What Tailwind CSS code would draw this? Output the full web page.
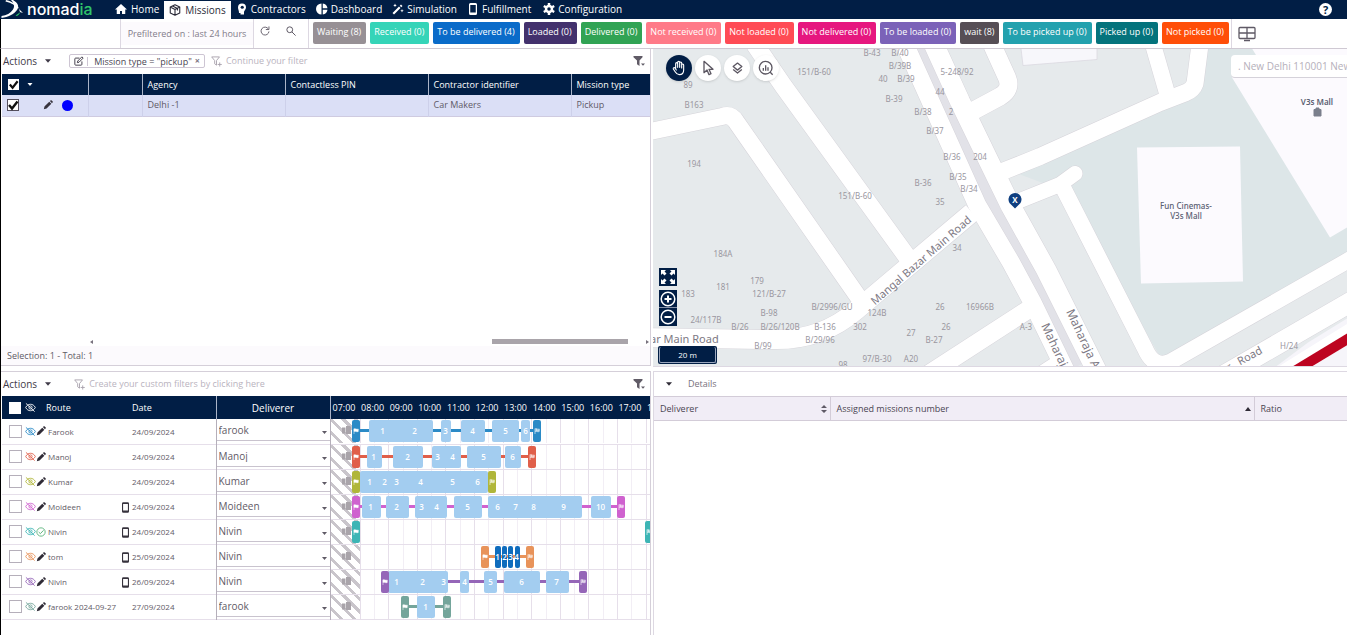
<!DOCTYPE html>
<html lang="en">
<head>
    <meta charset="UTF-8">
    <meta name="viewport" content="width=device-width, initial-scale=1.0">
    <title>Nomadia - Missions</title>
    <script src="https://cdn.jsdelivr.net/npm/@tailwindcss/browser@4"></script>
</head>
<body class="h-screen overflow-hidden flex flex-col bg-white font-['Open_Sans','Noto_Sans',sans-serif] text-[9px] leading-3 text-[#5f5a66]">

    <!-- Icons -->
    <svg class="hidden">
        <symbol id="eye-off" viewBox="0 0 24 24">
            <path d="M1.500 12C4 7 8 5 12 5s8 2 10.500 7c-2.500 5-6.500 7-10.500 7S4 17 1.500 12z" fill="none" stroke="currentColor" stroke-width="1.900"/>
            <circle cx="12" cy="12" r="3.500" fill="none" stroke="currentColor" stroke-width="1.900"/>
            <path d="M2 3l19 18" stroke="currentColor" stroke-width="2"/>
        </symbol>
        <symbol id="pencil" viewBox="0 0 24 24">
            <path d="M2 22l1.500-6.500L15 4l5 5L8.500 20.500zM16.500 2.500l1.500-1.500c1-1 2-.8 2.800 0l2.200 2.200c.8.8.8 1.800 0 2.800L21.500 7.500z" fill="currentColor"/>
        </symbol>
        <symbol id="phone" viewBox="0 0 16 24">
            <path d="M3 0h10a3 3 0 0 1 3 3v18a3 3 0 0 1-3 3H3a3 3 0 0 1-3-3V3a3 3 0 0 1 3-3zM2.500 4v15h11V4z" fill="currentColor" fill-rule="evenodd"/>
        </symbol>
        <symbol id="check-circle" viewBox="0 0 24 24">
            <circle cx="12" cy="12" r="10" fill="none" stroke="currentColor" stroke-width="2"/>
            <path d="M6.500 12l4 4 7.500-8" fill="none" stroke="currentColor" stroke-width="2.200"/>
        </symbol>
        <symbol id="caret" viewBox="0 0 10 6"><path d="M0 0h10L5 6z" fill="currentColor"/></symbol>
        <symbol id="tick" viewBox="0 0 12 12"><path d="M2 6l3 3.500L10.500 2.500" fill="none" stroke="#111" stroke-width="2.400"/></symbol>
        <symbol id="funnel-add" viewBox="0 0 24 24">
            <path d="M1.500 2h17l-6.500 8v10l-4-3v-7z" fill="none" stroke="currentColor" stroke-width="2"/>
            <path d="M19 14v9M14.500 18.500h9" stroke="currentColor" stroke-width="2"/>
        </symbol>
        <symbol id="funnel" viewBox="0 0 24 24">
            <path d="M1 2h18v2.500l-6 6.500v11l-5-3.500V11L1 4.500z" fill="currentColor"/>
            <path d="M16 17h8l-4 4.500z" fill="currentColor"/>
        </symbol>
        <symbol id="truck" viewBox="0 0 9 9"><path d="M0 1.500h3.500v6H0zM4 0h4l1 1v7H4z" fill="currentColor"/></symbol>
        <symbol id="flag" viewBox="0 0 12 12"><path d="M2 1v11M2 2c3-2 5 2 8.500 0v5c-3.500 2-5.500-2-8.500 0z" fill="#fff" stroke="#fff" stroke-width="1"/></symbol>
        <symbol id="flag-end" viewBox="0 0 12 12"><path d="M2 1v11M2 2c3-2 5 2 8.500 0v5c-3.500 2-5.500-2-8.500 0M5 1.500v5M8 2.500v5M2 4.500c3-2 5 2 8.500 0" fill="none" stroke="#fff" stroke-width="1.200"/></symbol>
    </svg>

    <!-- Navigation -->
    <header class="h-[19px] shrink-0 bg-[#011e45] text-white flex items-stretch">
        <a href="#" class="w-[110px] flex items-center gap-1 pb-[2px] pl-px text-[16px] font-medium font-[Inter]">
            <svg viewBox="0 0 22 18" class="w-[22px] h-[18px]">
                <path d="M5 0c8 2 11 5 13.500 9-4-3.500-8-6-14-7.500z" fill="#fff"/>
                <path d="M12 0c5 3 6.500 6.500 4 10C13 14.500 7 17 .5 18v-2c5-.5 9-3 11.500-6.500C14 6.500 13 3 10 0z" fill="#fff"/>
                <path d="M14.500 15.500c1.800-1 3.500-2.200 5-3.500-1 2-2 3-3.500 4z" fill="#2fc46a"/>
                <path d="M18 9l4 4-3-1z" fill="#fff"/>
            </svg>
            <span>nomad<span class="text-[#2fc46a]">ia</span></span>
        </a>
        <nav class="flex items-stretch pb-px text-[10px] font-medium">
            <a href="#" class="flex items-center gap-1 px-[5px]">
                <svg viewBox="0 0 24 24" class="w-3 h-3"><path d="M12 2L0 13h3.500v9H10v-6h4v6h6.500v-9H24z" fill="currentColor"/></svg>
                Home
            </a>
            <a href="#" class="flex items-center gap-1 px-[5px] mt-px -mb-px bg-white text-[#2a2a38]">
                <svg viewBox="0 0 24 24" class="w-3 h-3" fill="none" stroke="currentColor" stroke-width="2.200" stroke-linejoin="round"><path d="M12 1.500l9.500 4.500v12L12 22.500 2.500 18V6zM2.500 6L12 11l9.500-5M12 11v11.500M7 3.800L17 9v4"/></svg>
                Missions
            </a>
            <a href="#" class="flex items-center gap-[3px] px-[5px]">
                <svg viewBox="0 0 24 24" class="w-3 h-3"><path d="M12 1a8 8 0 0 1 8 8c0 4-4 6-4 9v5H9v-3H6c0-5-2-7-2-11a8 8 0 0 1 8-8z" fill="currentColor"/><circle cx="12.500" cy="8.500" r="3.200" fill="#011e45"/></svg>
                Contractors
            </a>
            <a href="#" class="flex items-center gap-[3px] px-[5px]">
                <svg viewBox="0 0 24 24" class="w-3 h-3"><path d="M11 1v22A11 11 0 0 1 11 1zM13.500 1A11 11 0 0 1 23 10.500h-9.500zM13.500 13.500H23A11 11 0 0 1 13.500 23z" fill="currentColor"/></svg>
                Dashboard
            </a>
            <a href="#" class="flex items-center gap-[3px] px-[5px]">
                <svg viewBox="0 0 24 24" class="w-3 h-3" fill="currentColor"><path d="M1 20L14 7l3 3L4 23zM15.500 5.500L18 3l3 3-2.500 2.500zM6 1l1 2.500L9.500 5 7 6 6 8.500 5 6 2.500 5 5 3.500zM20 12l1 2.500 2.500 1-2.500 1-1 2.500-1-2.500-2.500-1 2.500-1z"/></svg>
                Simulation
            </a>
            <a href="#" class="flex items-center gap-[5px] px-[7px]">
                <svg class="w-2 h-3"><use href="#phone"/></svg>
                Fulfillment
            </a>
            <a href="#" class="flex items-center gap-[3px] px-[5px]">
                <svg viewBox="0 0 24 24" class="w-3 h-3"><circle cx="12" cy="12" r="6" fill="none" stroke="currentColor" stroke-width="5"/><path d="M12 0v5M12 19v5M1.600 6l4.300 2.500M18.100 15.500l4.300 2.500M1.600 18l4.300-2.500M18.100 8.500L22.400 6" stroke="currentColor" stroke-width="5"/></svg>
                Configuration
            </a>
        </nav>
        <button class="ml-auto mr-[15px] self-center w-[13px] h-[13px] rounded-full bg-white text-[#011e45] text-[11px] leading-[13px] font-bold" aria-label="Help">?</button>
    </header>

    <!-- Toolbar -->
    <div class="h-[30px] shrink-0 border-b border-l border-b-[#cfc9d3] border-l-black flex">
        <div class="w-[120px] shrink-0 border-r border-[#ddd8e2]"></div>
        <div class="w-[132px] shrink-0 my-[3px] flex items-center justify-center bg-[#fcfafd] text-[#837c8a]">Prefiltered on : last 24 hours</div>
        <div class="w-[56px] shrink-0 flex items-center gap-4 pl-[6px] pb-[5px] border-x border-[#ddd8e2] text-[#5f5a66]">
            <button aria-label="Refresh"><svg viewBox="0 0 24 24" class="w-[10px] h-[10px]" fill="none" stroke="currentColor" stroke-width="2.200"><path d="M20 7a9.500 9.500 0 1 0 1.500 6M21.500 1v7.500H14"/></svg></button>
            <button aria-label="Search"><svg viewBox="0 0 24 24" class="w-[10px] h-[10px]" fill="none" stroke="currentColor" stroke-width="2.400"><circle cx="9" cy="9" r="7"/><path d="M14 14l9 9"/></svg></button>
        </div>
        <div class="flex gap-1 pt-[3px] pl-1 pr-[2px] text-white font-medium whitespace-nowrap">
            <button class="h-[22px] pb-[3px] pl-1 pr-[5px] rounded-xs bg-[#979095]">Waiting (8)</button>
            <button class="h-[22px] pb-[3px] pl-1 pr-[5px] rounded-xs bg-[#35d4b8]">Received (0)</button>
            <button class="h-[22px] pb-[3px] pl-1 pr-[5px] rounded-xs bg-[#0a6bc9]">To be delivered (4)</button>
            <button class="h-[22px] pb-[3px] pl-1 pr-[5px] rounded-xs bg-[#43316d]">Loaded (0)</button>
            <button class="h-[22px] pb-[3px] pl-1 pr-[5px] rounded-xs bg-[#31a354]">Delivered (0)</button>
            <button class="h-[22px] pb-[3px] pl-1 pr-[5px] rounded-xs bg-[#ff7a88]">Not received (0)</button>
            <button class="h-[22px] pb-[3px] pl-1 pr-[5px] rounded-xs bg-[#ff4b55]">Not loaded (0)</button>
            <button class="h-[22px] pb-[3px] pl-1 pr-[5px] rounded-xs bg-[#e6177f]">Not delivered (0)</button>
            <button class="h-[22px] pb-[3px] pl-1 pr-[5px] rounded-xs bg-[#7b62b8]">To be loaded (0)</button>
            <button class="h-[22px] pb-[3px] pl-1 pr-[5px] rounded-xs bg-[#564e55]">wait (8)</button>
            <button class="h-[22px] pb-[3px] pl-1 pr-[5px] rounded-xs bg-[#23a1ae]">To be picked up (0)</button>
            <button class="h-[22px] pb-[3px] pl-1 pr-[5px] rounded-xs bg-[#04737c]">Picked up (0)</button>
            <button class="h-[22px] pb-[3px] pl-1 pr-[5px] rounded-xs bg-[#ff4e08]">Not picked (0)</button>
        </div>
        <button class="border-l border-[#ddd8e2] pl-[6px]" aria-label="Layout">
            <svg viewBox="0 0 18 16" class="w-[18px] h-4" fill="none" stroke="#5f5a66" stroke-width="1.300"><rect x="1" y="1.500" width="16" height="11" rx="1"/><path d="M1 7h16M9 1.500v11M6 14.500h6"/></svg>
        </button>
    </div>

    <main class="grow min-h-0 grid grid-cols-[652fr_694fr] grid-rows-[322fr_264fr] border-l border-black">

        <!-- Missions -->
        <section class="mr-[2px] mb-[5px] border-r border-b border-[#d5cfd9] flex flex-col min-w-0">
            <div class="h-[25px] shrink-0 flex items-center pl-[2px] pr-[5px] pb-px">
                <button class="flex items-center gap-2 text-[10px] text-[#3f3a48]">Actions <svg class="w-[6px] h-1"><use href="#caret"/></svg></button>
                <div class="ml-[18px] h-[14px] flex items-center border border-[#cdc5d3] rounded-xs px-1 text-[#4a4552]">
                    <svg viewBox="0 0 24 24" class="w-[10px] h-[10px] mr-[3px]" fill="none" stroke="currentColor" stroke-width="2.400"><path d="M19 13v7a2 2 0 0 1-2 2H4a2 2 0 0 1-2-2V7a2 2 0 0 1 2-2h9M8 16l1-4L19 2l3 3-10 10z"/></svg>
                    <span class="border-l border-[#cdc5d3] pl-[6px] leading-[9px]">Mission type = "pickup"</span>
                    <button class="ml-[3px] font-bold text-[#7b7583]" aria-label="Remove filter">×</button>
                </div>
                <svg class="ml-[6px] w-[11px] h-[11px] text-[#a8a2ad]"><use href="#funnel-add"/></svg>
                <input type="text" aria-label="Filter missions" placeholder="Continue your filter" class="grow ml-1 outline-none placeholder:text-[#b9b3be]">
                <button aria-label="Filters"><svg class="w-[12px] h-[12px] text-[#605b66]"><use href="#funnel"/></svg></button>
            </div>
            <div class="grow pl-px">
                <table class="w-full table-fixed text-left">
                    <colgroup><col class="w-[86px]"><col class="w-[54px]"><col class="w-[143px]"><col class="w-[143px]"><col class="w-[143px]"><col></colgroup>
                    <thead class="bg-[#011e45] text-white">
                        <tr class="h-[21px]">
                            <th class="border-r border-[#aab4c8] pl-[6px]">
                                <div class="flex items-center gap-2">
                                    <span class="relative w-[11px] h-[11px]">
                                        <input type="checkbox" checked aria-label="Select all missions" class="block appearance-none w-[11px] h-[11px] bg-white peer">
                                        <svg class="absolute inset-0 w-[11px] h-[11px] hidden peer-checked:block pointer-events-none"><use href="#tick"/></svg>
                                    </span>
                                    <svg class="w-[6px] h-[3px]"><use href="#caret"/></svg>
                                </div>
                            </th>
                            <th class="border-r border-[#aab4c8]"></th>
                            <th class="border-r border-[#aab4c8] pl-[5px] font-medium">Agency</th>
                            <th class="border-r border-[#aab4c8] pl-[5px] font-medium">Contactless PIN</th>
                            <th class="border-r border-[#aab4c8] pl-[5px] font-medium">Contractor identifier</th>
                            <th class="pl-[5px] font-medium">Mission type</th>
                        </tr>
                    </thead>
                    <tbody>
                        <tr class="h-[21px] bg-[#dbdff6] border-b border-[#cfcbe0]">
                            <td class="border-r border-[#cdd0ea] pl-[5px]">
                                <div class="flex items-center">
                                    <span class="relative w-3 h-3">
                                        <input type="checkbox" checked aria-label="Select mission" class="block appearance-none w-3 h-3 bg-white border border-[#55505e] peer">
                                        <svg class="absolute inset-0 w-3 h-3 hidden peer-checked:block pointer-events-none"><use href="#tick"/></svg>
                                    </span>
                                    <svg class="ml-6 w-[10px] h-[10px] text-[#37333d]"><use href="#pencil"/></svg>
                                    <span class="ml-[9px] w-[11px] h-[11px] rounded-full bg-[#0000ff]"></span>
                                </div>
                            </td>
                            <td class="border-r border-[#cdd0ea]"></td>
                            <td class="border-r border-[#cdd0ea] pl-[5px]">Delhi -1</td>
                            <td class="border-r border-[#cdd0ea] pl-[5px]"></td>
                            <td class="border-r border-[#cdd0ea] pl-[5px]">Car Makers</td>
                            <td class="pl-[5px]">Pickup</td>
                        </tr>
                    </tbody>
                </table>
            </div>
            <div class="h-[9px] flex items-center pr-px text-[#77717d]">
                <svg viewBox="0 0 3 4" class="ml-[89px] w-[3px] h-1"><path d="M3 0L0 2l3 2z" fill="currentColor"/></svg>
                <span class="ml-auto w-[136px] h-[5px] bg-[#a9a4aa]"></span>
                <svg viewBox="0 0 3 4" class="ml-[18px] w-[3px] h-1"><path d="M0 0l3 2-3 2z" fill="currentColor"/></svg>
            </div>
            <div class="h-[19px] flex items-center pt-px pl-[6px] bg-[#fcfafd]">Selection: 1 - Total: 1</div>
        </section>

        <!-- Map -->
        <section class="relative mb-1 min-h-0 overflow-hidden border-b border-[#ddd8e2]">
            <svg viewBox="653 49 694 318" preserveAspectRatio="xMidYMid slice" class="block w-full h-full bg-[#e6eaec]">
                <path d="M1007 170L1160 101 1195 92 1202 49H1347V261L1163 362 1063 191z" fill="#dde6e8"/>
                <path d="M921 49L1000 216 1077 367" fill="none" stroke="#e2e2e8" stroke-width="14"/>
                <g fill="none" stroke="#d6d4da" stroke-linejoin="round">
                    <path d="M645 133L722 117Q731 114 736 122L860 300" stroke-width="18"/>
                    <path d="M755 45L783 86 909 260" stroke-width="19"/>
                    <path d="M645 338L770 340Q820 342 856 311L972 213" stroke-width="20"/>
                    <path d="M905 45L977 205 1011 263 1032 302 1066 372" stroke-width="19"/>
                    <path d="M934 45L960 102 989 162 1011 207 1046 270 1098 374" stroke-width="21"/>
                    <path d="M972 112L1000 97Q1012 90 1007 78L992 45" stroke-width="19"/>
                    <path d="M1000 173L1040 157 1160 103 1186 93Q1193 90 1195 84L1200 45" stroke-width="18"/>
                    <path d="M1153 45L1168 97" stroke-width="17"/>
                    <path d="M1010 205L1060 185 1075 174" stroke-width="16" stroke-linecap="round"/>
                    <path d="M1063 188L1145 349Q1154 370 1171 362L1355 257" stroke-width="17"/>
                    <path d="M1220 378L1355 300" stroke-width="21"/>
                    <path d="M925 377L1030 309" stroke-width="19"/>
                    <path d="M1036 377L1062 360" stroke-width="15"/>
                </g>
                <g fill="none" stroke="#fff" stroke-linejoin="round">
                    <path d="M645 133L722 117Q731 114 736 122L860 300" stroke-width="17"/>
                    <path d="M755 45L783 86 909 260" stroke-width="18"/>
                    <path d="M645 338L770 340Q820 342 856 311L972 213" stroke-width="19"/>
                    <path d="M905 45L977 205 1011 263 1032 302 1066 372" stroke-width="18"/>
                    <path d="M934 45L960 102 989 162 1011 207 1046 270 1098 374" stroke-width="20"/>
                    <path d="M972 112L1000 97Q1012 90 1007 78L992 45" stroke-width="18"/>
                    <path d="M1000 173L1040 157 1160 103 1186 93Q1193 90 1195 84L1200 45" stroke-width="17"/>
                    <path d="M1153 45L1168 97" stroke-width="16"/>
                    <path d="M1010 205L1060 185 1075 174" stroke-width="15" stroke-linecap="round"/>
                    <path d="M1063 188L1145 349Q1154 370 1171 362L1355 257" stroke-width="16"/>
                    <path d="M1220 378L1355 300" stroke-width="20"/>
                    <path d="M925 377L1030 309" stroke-width="18"/>
                    <path d="M1036 377L1062 360" stroke-width="14"/>
                </g>
                <path d="M1308 343L1347 319V367H1276z" fill="#f6f5fa"/>
                <path d="M1278 378L1355 330" stroke="#fff" stroke-width="18"/>
                <path d="M1284 378L1355 335" stroke="#bd0420" stroke-width="10"/>
                <path d="M1021 49L1023 66 1097 60V49z" fill="#f7f7fb" stroke="#d9d6de" stroke-width=".7"/>
                <path d="M1137 148L1240 147 1243 282 1141 284z" fill="#fcfafe"/>
                <path d="M1252 49L1260 62 1232 78 1330 238 1347 228V49z" fill="#fcfafe"/>
                <g class="text-[8px] font-['Noto_Sans',sans-serif]" fill="#9a979f" text-anchor="middle">
                    <text x="688" y="88">89</text><text x="694" y="108">B163</text>
                    <text x="694" y="167">194</text><text x="814" y="75">151/B-60</text>
                    <text x="855" y="199">151/B-60</text><text x="872" y="56">B-43</text>
                    <text x="900" y="56">B/40</text><text x="900" y="69">B/39B</text>
                    <text x="883" y="82">40</text><text x="906" y="82">B/39</text>
                    <text x="894" y="102">B-39</text><text x="957" y="75">5-248/92</text>
                    <text x="940" y="95">44</text><text x="923" y="115">B/38</text>
                    <text x="951" y="115">2</text><text x="935" y="134">B/37</text>
                    <text x="952" y="160">B/36</text><text x="980" y="160">204</text>
                    <text x="958" y="180">B/35</text><text x="923" y="186">B-36</text>
                    <text x="969" y="192">B/34</text><text x="940" y="205">35</text>
                    <text x="957" y="251">34</text><text x="723" y="257">184A</text>
                    <text x="757" y="284">179</text><text x="723" y="290">181</text>
                    <text x="688" y="297">183</text><text x="769" y="297">121/B-27</text>
                    <text x="769" y="316">B-98</text><text x="706" y="323">24/117B</text>
                    <text x="740" y="330">B/26</text><text x="780" y="330">B/26/120B</text>
                    <text x="763" y="349">B/99</text><text x="832" y="310">B/2996/GU</text>
                    <text x="877" y="316">124B</text><text x="825" y="330">B-136</text>
                    <text x="860" y="330">302</text><text x="820" y="343">B/29/96</text>
                    <text x="940" y="310">26</text><text x="980" y="310">16966B</text>
                    <text x="946" y="330">26</text><text x="911" y="336">27</text>
                    <text x="934" y="343">B-27</text><text x="877" y="362">97/B-30</text>
                    <text x="911" y="362">A20</text><text x="843" y="368">98</text>
                    <text x="1026" y="330">A-3</text><text x="1289" y="349">H/24</text>
                </g>
                <g class="text-[11px] font-['Noto_Sans',sans-serif]" fill="#7d7984">
                    <text x="650" y="343">ar Main Road</text>
                    <text transform="translate(875 306) rotate(-41)">Mangal Bazar Main Road</text>
                    <text transform="translate(1066 312) rotate(65)" class="text-[12px]">Maharaja Agrasen</text>
                    <text transform="translate(1041 326) rotate(65)" class="text-[12px]">Maharaja</text>
                    <text transform="translate(1229 372) rotate(-29)">r</text>
                    <text transform="translate(1240 366) rotate(-29)">Road</text>
                </g>
                <g class="text-[8px] font-['Noto_Sans',sans-serif] font-medium" fill="#5a6072" text-anchor="middle">
                    <text x="1186" y="209">Fun Cinemas-</text>
                    <text x="1186" y="219">V3s Mall</text>
                    <text x="1317" y="105" class="font-semibold">V3s Mall</text>
                </g>
                <path d="M1314 110h7v6.500h-7zM1316 110v-1.500h3v1.500" fill="#7a7f8c" stroke="#7a7f8c"/>
                <path d="M1015 209L1009.500 203.500a6.500 6.500 0 1 1 11 0z" fill="#0f3f80"/>
                <text x="1015" y="203" class="text-[8px] font-bold" fill="#fff" text-anchor="middle">X</text>
            </svg>

            <div class="absolute left-[13px] top-[6px] flex gap-[3px] text-[#5c5762]">
                <button class="w-[26px] h-[26px] rounded-full bg-[#011e45] text-white shadow flex items-center justify-center" aria-label="Pan">
                    <svg viewBox="0 0 24 24" class="w-4 h-4" fill="none" stroke="currentColor" stroke-width="1.700" stroke-linecap="round" stroke-linejoin="round"><path d="M7 13V5.500a1.500 1.500 0 0 1 3 0V11M10 11V3.500a1.500 1.500 0 0 1 3 0V11M13 11V4.500a1.500 1.500 0 0 1 3 0V12M16 12V7.500a1.500 1.500 0 0 1 3 0V15c0 4-2.500 7-6.500 7-3 0-4.500-1.500-6-4L3.500 13.500a1.500 1.500 0 0 1 2.500-1.500L8 15"/></svg>
                </button>
                <button class="w-[26px] h-[26px] rounded-full bg-white shadow flex items-center justify-center" aria-label="Select">
                    <svg viewBox="0 0 24 24" class="w-4 h-4" fill="none" stroke="currentColor" stroke-width="2" stroke-linejoin="round"><path d="M6 2v17l4.500-4 3 7 3-1.500-3-6.500h6z"/></svg>
                </button>
                <button class="w-[26px] h-[26px] rounded-full bg-white shadow flex items-center justify-center" aria-label="Layers">
                    <svg viewBox="0 0 24 24" class="w-[13px] h-[13px]" fill="none" stroke="currentColor" stroke-width="2.400" stroke-linejoin="round"><path d="M12 2l8 6.500-8 6.500-8-6.500zM4 14l8 6.500 8-6.500"/></svg>
                </button>
                <button class="w-[26px] h-[26px] rounded-full bg-white shadow flex items-center justify-center" aria-label="Analyse">
                    <svg viewBox="0 0 24 24" class="w-4 h-4" fill="none" stroke="currentColor" stroke-width="2"><circle cx="11.500" cy="11.500" r="9.500"/><path d="M18 18l4 4M8 12v4M11.500 8v8M15 11v5"/></svg>
                </button>
            </div>

            <input type="text" value=". New Delhi 110001 New Delhi" aria-label="Search address" class="absolute right-0 top-[6px] w-[116px] h-[23px] pl-[7px] rounded-l bg-white border-b border-[#d5d2da] text-[10px] text-[#b5afba] outline-none">

            <div class="absolute left-[6px] bottom-10 flex flex-col text-white">
                <button class="w-[18px] h-[18px] mb-1 bg-[#011e45] flex items-center justify-center" aria-label="Fullscreen">
                    <svg viewBox="0 0 18 18" class="w-[18px] h-[18px]"><path d="M2 2h5L5.500 3.500 7.500 5.500 5.500 7.500 3.500 5.500 2 7zM16 2v5L14.500 5.500 12.500 7.500 10.500 5.500 12.500 3.500 11 2zM2 16v-5L3.500 12.500 5.500 10.500 7.500 12.500 5.500 14.500 7 16zM16 16h-5L12.500 14.500 10.500 12.500 12.500 10.500 14.500 12.500 16 11z" fill="currentColor"/></svg>
                </button>
                <button class="w-[18px] h-[18px] bg-[#011e45] border-b border-[#8792a8]" aria-label="Zoom in">
                    <svg viewBox="0 0 18 18" class="w-[18px] h-[18px]" fill="none" stroke="currentColor" stroke-width="1.500"><circle cx="9" cy="9" r="6.800"/><path d="M9 5.500v7M5.500 9h7" stroke-width="2"/></svg>
                </button>
                <button class="w-[18px] h-[18px] bg-[#011e45]" aria-label="Zoom out">
                    <svg viewBox="0 0 18 18" class="w-[18px] h-[18px]" fill="none" stroke="currentColor" stroke-width="1.500"><circle cx="9" cy="9" r="6.800"/><path d="M5.500 9h7" stroke-width="2"/></svg>
                </button>
            </div>
            <div class="absolute left-[5px] bottom-[2px] w-[59px] h-[18px] p-px rounded-xs bg-[#011e45]">
                <div class="h-4 border border-t-0 border-[#9aa6bd] rounded-xs text-center text-white text-[8px] leading-[15px] font-medium">20 m</div>
            </div>
        </section>

        <!-- Routes -->
        <section class="mr-[2px] border-t border-r border-[#d5cfd9] flex flex-col min-w-0 min-h-0 overflow-hidden">
            <div class="h-6 shrink-0 flex items-center pl-[2px] pr-[5px]">
                <button class="flex items-center gap-2 text-[10px] text-[#3f3a48]">Actions <svg class="w-[6px] h-1"><use href="#caret"/></svg></button>
                <svg class="ml-[23px] w-[11px] h-[11px] text-[#a8a2ad]"><use href="#funnel-add"/></svg>
                <input type="text" aria-label="Filter routes" placeholder="Create your custom filters by clicking here" class="grow ml-1 outline-none placeholder:text-[#b9b3be]">
                <button aria-label="Filters"><svg class="w-[12px] h-[12px] text-[#605b66]"><use href="#funnel"/></svg></button>
            </div>
            <div class="pl-px">
            <table class="w-full table-fixed text-left">
                <colgroup><col class="w-[44px]"><col class="w-[74px]"><col class="w-[96px]"><col class="w-[114px]"><col></colgroup>
                <thead class="bg-[#011e45] text-white">
                    <tr class="h-[23px]">
                        <th class="pl-[7px]">
                            <div class="flex items-center gap-1">
                                <input type="checkbox" aria-label="Select all routes" class="shrink-0 appearance-none w-3 h-3 bg-white">
                                <svg class="shrink-0 w-[11px] h-[11px]"><use href="#eye-off"/></svg>
                            </div>
                        </th>
                        <th class="font-medium">Route</th>
                        <th class="pl-3 font-medium">Date</th>
                        <th class="border-x border-[#aab4c8] text-[10px] text-center font-medium">Deliverer</th>
                        <th class="font-medium"><div id="hours" class="flex overflow-hidden"></div></th>
                    </tr>
                </thead>
                <tbody id="routes" class="text-[8px]"></tbody>
            </table>
            </div>
        </section>

        <!-- Details -->
        <section class="border-t border-l border-[#ddd8e2]">
            <button class="h-6 flex items-center gap-4 pl-3 text-[#77717d]"><svg class="w-[6px] h-1 text-[#2f2b36]"><use href="#caret"/></svg> Details</button>
            <table class="w-full table-fixed text-left text-[#4a4552]">
                <colgroup><col class="w-[176px]"><col><col class="w-[93px]"></colgroup>
                <thead class="bg-[#f1edf6]">
                    <tr class="h-6 border-y border-[#d3ccd8]">
                        <th class="px-[6px] border-r border-[#d3ccd8] font-medium">
                            <div class="flex items-center justify-between">Deliverer <svg viewBox="0 0 6 8" class="w-[6px] h-2 -mr-[3px]"><path d="M0 3h6L3 0zM0 5h6L3 8z" fill="#5f5a66"/></svg></div>
                        </th>
                        <th class="px-[6px] border-r border-[#d3ccd8] font-medium">
                            <div class="flex items-center justify-between">Assigned missions number <svg viewBox="0 0 6 4" class="w-[6px] h-1 -mr-[3px]"><path d="M0 4h6L3 0z" fill="#2f2b36"/></svg></div>
                        </th>
                        <th class="px-[6px] font-medium">Ratio</th>
                    </tr>
                </thead>
            </table>
        </section>
    </main>

    <script>
        // bars are [start, end, [[label, centre], ...]], in px from the start of the timeline
        const routes = [
            { name: "Farook", date: "24/09/2024", who: "farook", color: "#2b8ac6", start: 21, end: 202, bars: [[38, 102, [[1, 52], [2, 84]]], [110, 120, [[3, 115]]], [130, 154, [[4, 142]]], [161, 188, [[5, 175]]], [190, 199, [[6, 195]]]] },
            { name: "Manoj", date: "24/09/2024", who: "Manoj", color: "#e05f4a", start: 21, end: 197, bars: [[36, 51, [[1, 43]]], [62, 92, [[2, 77]]], [101, 130, [[3, 107], [4, 122]]], [136, 170, [[5, 153]]], [174, 190, [[6, 182]]]] },
            { name: "Kumar", date: "24/09/2024", who: "Kumar", color: "#b0b63a", start: 21, end: 157, bars: [[29, 157, [[1, 39], [2, 54], [3, 66], [4, 90], [5, 122], [6, 147]]]] },
            { name: "Moideen", date: "24/09/2024", who: "Moideen", color: "#cf62cf", start: 21, end: 286, phone: true, bars: [[31, 50, [[1, 40]]], [55, 78, [[2, 66]]], [84, 116, [[3, 91], [4, 106]]], [123, 151, [[5, 137]]], [157, 251, [[6, 167], [7, 185], [8, 203], [9, 233]]], [260, 280, [[10, 270]]]] },
            { name: "Nivin", date: "24/09/2024", who: "Nivin", color: "#3db5b5", start: 21, end: 314, phone: true, done: true, bars: [] },
            { name: "tom", date: "25/09/2024", who: "Nivin", color: "#e8935a", start: 150, end: 195, phone: true, dark: true, bars: [[164, 170, [[1, 167]]], [171, 176, [[2, 174]]], [177, 182, [[3, 180]]], [184, 189, [[4, 186]]]] },
            { name: "Nivin", date: "26/09/2024", who: "Nivin", color: "#9566b8", start: 50, end: 248, phone: true, bars: [[57, 117, [[1, 66], [2, 92], [3, 113]]], [129, 138, [[4, 134]]], [153, 166, [[5, 160]]], [173, 209, [[6, 191]]], [215, 238, [[7, 226]]]] },
            { name: "farook 2024-09-27", date: "27/09/2024", who: "farook", color: "#74a59b", start: 70, end: 112, bars: [[86, 104, [[1, 95]]]] }
        ];
        const hourWidth = 28.6;

        document.getElementById('hours').innerHTML = Array.from({ length: 12 }, (_, i) =>
            `<span class="shrink-0 pl-[2px] whitespace-nowrap" style="width:${hourWidth}px">${String(i + 7).padStart(2, '0')}:00</span>`
        ).join('');

        const grid = Array.from({ length: 22 }, (_, i) =>
            `<span class="absolute inset-y-0 w-px ${i % 2 ? 'bg-[#e6dfea]' : 'bg-[#f2eef5]'}" style="left:${Math.round((i + 1) * hourWidth / 2)}px"></span>`
        ).join('');

        const flag = (x, color, icon) =>
            `<span class="absolute top-px w-2 h-[22px] rounded-xs flex items-center justify-center" style="left:${x}px;background:${color}"><svg class="w-[6px] h-[6px]"><use href="#${icon}"/></svg></span>`;

        const timeline = r => {
            const line = r.bars.length
                ? `<span class="absolute top-[10px] h-[3px]" style="left:${r.start}px;width:${r.end - r.start}px;background:${r.color}"></span>` : '';
            const bars = r.bars.map(([from, to, labels]) =>
                `<span class="absolute top-px h-[22px] rounded-xs ${r.dark ? 'bg-[#0f6cbd]' : 'bg-[#a3cdf0]'}" style="left:${from}px;width:${to - from}px"></span>` +
                labels.map(([n, x]) => `<span class="absolute top-[6px] w-4 -ml-2 text-center text-white font-semibold" style="left:${x}px">${n}</span>`).join('')
            ).join('');
            return line + bars + flag(r.start, r.color, 'flag') + flag(r.end, r.color, 'flag-end');
        };

        document.getElementById('routes').innerHTML = routes.map((r, i) => `
            <tr class="h-[25px] border-b border-[#e6dfea]">
                <td class="pl-[7px]">
                    <div class="flex items-center">
                        <input type="checkbox" aria-label="Select route ${i + 1}" class="shrink-0 appearance-none w-[13px] h-[13px] mr-[3px] border border-[#b5afba] bg-white">
                        <svg class="shrink-0 w-[11px] h-[11px]" style="color:${r.color}"><use href="#eye-off"/></svg>
                        <svg class="shrink-0 w-[10px] h-[10px] ${r.done ? 'text-[#4fae72]' : 'text-[#2f2b36]'}"><use href="#${r.done ? 'check-circle' : 'pencil'}"/></svg>
                    </div>
                </td>
                <td class="pl-[2px] pt-px whitespace-nowrap">${r.name}</td>
                <td class="pt-px">
                    <div class="flex items-center gap-[3px]">
                        <svg class="w-[7px] h-[11px] ml-[2px] text-[#37333d]">${r.phone ? '<use href="#phone"/>' : ''}</svg>
                        ${r.date}
                    </div>
                </td>
                <td class="border-x border-[#b5afba] align-top">
                    <div class="relative h-[22px] border-b border-[#c9c3ce]">
                        <select aria-label="Deliverer ${i + 1}" class="block w-full h-[22px] pl-[2px] appearance-none text-[10px] outline-none"><option>${r.who}</option></select>
                        <svg class="absolute right-[3px] top-3 w-[5px] h-[3px] pointer-events-none"><use href="#caret"/></svg>
                    </div>
                </td>
                <td>
                    <div class="relative h-6 overflow-hidden">
                        ${grid}
                        <span class="absolute left-0 top-0 w-[29px] h-6 bg-[repeating-linear-gradient(45deg,#fff_0,#fff_6px,#c9c5cb_6px,#c9c5cb_9px)]"></span>
                        <svg class="absolute left-[11px] top-[7px] w-[9px] h-[9px] text-[#a9a4aa]"><use href="#truck"/></svg>
                        ${timeline(r)}
                    </div>
                </td>
            </tr>`).join('');
    </script>

</body>
</html>
